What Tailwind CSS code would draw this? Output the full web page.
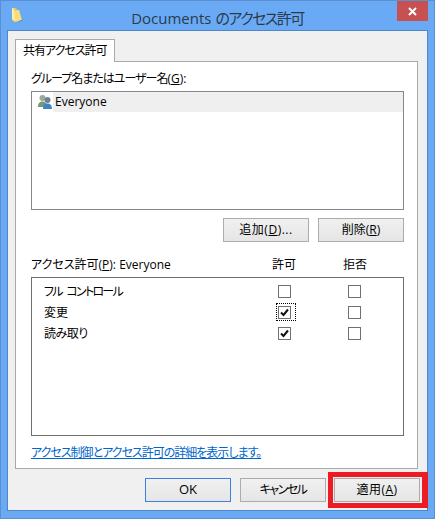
<!doctype html>
<html lang="ja">

<head>
  <meta charset="UTF-8">
  <script src="https://cdn.jsdelivr.net/npm/@tailwindcss/browser@4"></script>
  <title>Documents のアクセス許可</title>
</head>

<body class="w-[435px] h-[519px] overflow-hidden bg-[#6aaaf5] font-['Open_Sans','Noto_Sans_CJK_JP',sans-serif] [font-feature-settings:'palt'] text-[12px] text-black">
  <div class="relative h-[519px] border border-[#5b8fd0] px-[6px] pb-[7px] pt-[29px]">

    <svg class="absolute left-[10px] top-[6px]" width="13" height="16" viewBox="0 0 13 16">
      <path d="M1 1 L5 1 L6 3 L8 3 L10 13 L3 15 L1 13 Z" fill="#e9c65e" />
      <path d="M3 4 L8 3 L11 13 L4 15 Z" fill="#f7dd7e" />
      <path d="M1 1 L3 2 L4 14 L1 12 Z" fill="#fbeeb0" />
      <path d="M10 13 L12 12.500 L12 13.500 L6 15.500 Z" fill="#5d8ec8" />
    </svg>
    <div class="absolute left-0 right-0 top-[7px] text-center text-[15px] leading-[20px] text-[#2a3a4e]">Documents <span class="tracking-[-1.5px]">のアクセス許可</span></div>
    <div class="absolute right-[6px] top-0 flex h-[20px] w-[31px] items-center justify-center bg-[#c75050]">
      <svg width="9" height="9" viewBox="0 0 9 9">
        <path d="M1 1 L8 8 M8 1 L1 8" stroke="#fff" stroke-width="2" />
      </svg>
    </div>

    <div class="flex h-[481px] flex-col border border-[#4f86c8] bg-[#f0f0f0] px-[7px]">
      <div class="flex h-[30px] items-end pt-[8px]">
        <div class="relative z-10 -mb-px flex h-[23px] w-[100px] items-center whitespace-nowrap border border-b-0 border-[#a9a9a9] bg-white pl-[7px] tracking-[-1px]">共有アクセス許可</div>
      </div>

      <div class="flex h-[408px] w-[403px] flex-col border border-[#a9a9a9] bg-white pl-[15px] pr-[13px]">
        <div class="flex h-[29px] items-end pb-[3px]">
          <span><span class="tracking-[-1px]">グループ名またはユーザー名</span>(<span class="underline">G</span>):</span>
        </div>

        <div class="h-[119px] border border-[#828790] bg-white">
          <div class="flex h-[20px] items-center pl-[5px]">
            <svg width="16" height="16" viewBox="0 0 16 16" class="shrink-0">
              <circle cx="5.500" cy="4" r="3" fill="#9aaa94" />
              <path d="M1 13 C1 9 3 7.500 5.500 7.500 C8 7.500 10 9 10 13 Z" fill="#6f9a78" />
              <circle cx="10.500" cy="6" r="3" fill="#6f7f96" />
              <path d="M6 15 C6 11 8 9.500 10.500 9.500 C13 9.500 15 11 15 15 Z" fill="#3f83c4" />
            </svg>
            <span class="flex h-full flex-1 items-center bg-[#efefef] pl-[2px]">Everyone</span>
          </div>
        </div>

        <div class="flex justify-end gap-[9px] pt-[8px]">
          <div class="flex h-[24px] w-[86px] items-center justify-center border border-[#acacac] bg-gradient-to-b from-[#f0f0f0] to-[#e5e5e5]">
            <span class="tracking-[0.5px]">追加(<span class="underline">D</span>)...</span>
          </div>
          <div class="flex h-[24px] w-[86px] items-center justify-center border border-[#acacac] bg-gradient-to-b from-[#f0f0f0] to-[#e5e5e5]">
            <span>削除(<span class="underline">R</span>)</span>
          </div>
        </div>

        <div class="flex h-[35px] items-end pb-[3px]">
          <span class="flex-1">アクセス許可(<span class="underline">P</span>): Everyone</span>
          <span class="w-[24px] text-center">許可</span>
          <span class="w-[47px]"></span>
          <span class="w-[24px] text-center">拒否</span>
          <span class="w-[37px]"></span>
        </div>

        <div class="flex h-[159px] flex-col gap-[8px] border border-[#6f6f6f] pl-[12px] pr-[42px] pt-[7px]">
          <div class="flex h-[13px] items-center">
            <span class="flex-1 tracking-[-1.7px] [word-spacing:3px]">フル コントロール</span>
            <span class="mr-[57px] h-[13px] w-[13px] border border-[#707070] bg-white"></span>
            <span class="h-[13px] w-[13px] border border-[#707070] bg-white"></span>
          </div>
          <div class="flex h-[13px] items-center">
            <span class="flex-1">変更</span>
            <span class="relative mr-[57px] flex h-[13px] w-[13px] items-center justify-center border border-[#707070] bg-white">
              <svg width="9" height="9" viewBox="0 0 9 9"><path d="M1 4.500 L3.500 7 L8 1.500" fill="none" stroke="#111" stroke-width="2" /></svg>
              <span class="absolute -left-[3px] -top-[4px] h-[18px] w-[20px] border border-dotted border-black"></span>
            </span>
            <span class="h-[13px] w-[13px] border border-[#707070] bg-white"></span>
          </div>
          <div class="flex h-[13px] items-center">
            <span class="flex-1 tracking-[-0.5px]">読み取り</span>
            <span class="mr-[57px] flex h-[13px] w-[13px] items-center justify-center border border-[#707070] bg-white">
              <svg width="9" height="9" viewBox="0 0 9 9"><path d="M1 4.500 L3.500 7 L8 1.500" fill="none" stroke="#111" stroke-width="2" /></svg>
            </span>
            <span class="h-[13px] w-[13px] border border-[#707070] bg-white"></span>
          </div>
        </div>

        <div class="pt-[8px]">
          <span class="text-[#0066cc] underline tracking-[-1px]">アクセス制御とアクセス許可の詳細を表示します。</span>
        </div>
      </div>

      <div class="flex justify-end pt-[9px]">
        <div class="mr-[9px] flex h-[24px] w-[86px] items-center justify-center border border-[#3c7fe0] bg-gradient-to-b from-[#f0f0f0] to-[#e5e5e5] text-[13px]">OK</div>
        <div class="mr-[8px] flex h-[24px] w-[86px] items-center justify-center border border-[#acacac] bg-gradient-to-b from-[#f0f0f0] to-[#e5e5e5] tracking-[-1.5px]">キャンセル</div>
        <div class="relative flex h-[24px] w-[86px] items-center justify-center border border-[#acacac] bg-gradient-to-b from-[#f0f0f0] to-[#e5e5e5]">
          <span class="tracking-[0.5px]">適用(<span class="underline">A</span>)</span>
          <div class="absolute -bottom-[7px] -left-[7px] -right-[9px] -top-[7px] border-y-[5px] border-l-[5px] border-r-[6px] border-[#ed1c24]"></div>
        </div>
      </div>
    </div>
  </div>
</body>

</html>
